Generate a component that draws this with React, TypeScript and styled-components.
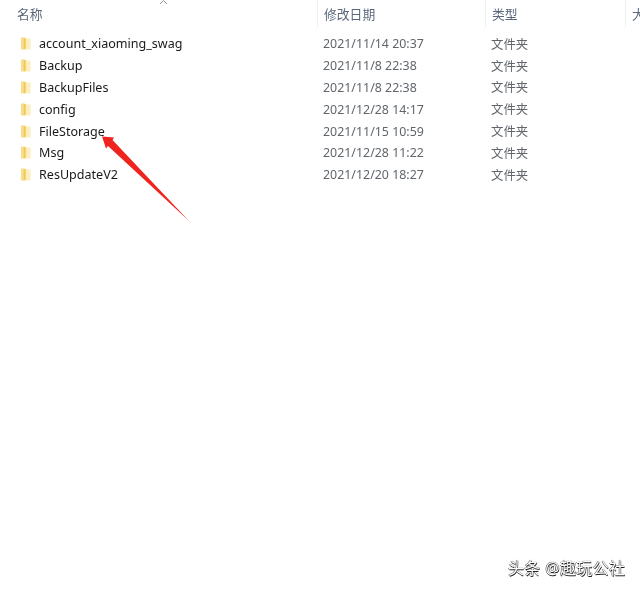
import React from "react";
import styled, { createGlobalStyle } from "styled-components";

const Global = createGlobalStyle`
  html, body { margin: 0; padding: 0; background: #fff; }
  #root { width: 640px; height: 591px; overflow: hidden; }
`;
const Page = styled.div`
  position: relative;
  width: 640px;
  height: 591px;
  overflow: hidden;
  background: #fff;
  font-family: "Noto Sans", "Noto Sans CJK SC", sans-serif;
  filter: blur(0.35px);
`;
const Header = styled.div`
  display: grid;
  grid-template-columns: 317px 168px 140px 15px;
  height: 27px;
  margin-bottom: 6px;
`;
const HeaderCell = styled.div<{ $first?: boolean }>`
  position: relative;
  padding: 5px 0 0 ${(p) => (p.$first ? "17px" : "6px")};
  font-size: 12.8px;
  line-height: 18px;
  color: #5a6779;
  white-space: nowrap;
  overflow: hidden;
  border-left: ${(p) => (p.$first ? "none" : "1px solid #eef0f2")};
`;
const SortCaret = styled.svg`
  position: absolute;
  left: 159px;
  top: 0;
`;
const List = styled.div`
  display: flex;
  flex-direction: column;
`;
const Row = styled.div`
  display: grid;
  grid-template-columns: 317px 168px 140px;
  height: 21.8px;
  align-items: center;
  white-space: nowrap;
`;
const NameCell = styled.div`
  display: flex;
  align-items: center;
  gap: 8px;
  padding-left: 20px;
  font-size: 12.55px;
  color: #1a1a1a;
`;
const Cell = styled.div`
  padding-left: 6px;
  font-size: 12.4px;
  color: #60666c;
`;
const Arrow = styled.svg`
  position: absolute;
  left: 95px;
  top: 128px;
`;
const Watermark = styled.div`
  position: absolute;
  left: 508px;
  top: 557px;
  font-size: 16px;
  line-height: 22px;
  letter-spacing: 0.35px;
  color: #fff;
  white-space: nowrap;
  text-shadow: 0 0 1px #222, 0.5px 0.5px 0.5px #222, -0.5px -0.5px 0.5px #555;
`;

const FolderIcon = () => (
  <svg width="11" height="13" viewBox="0 0 11 13">
    <path d="M1 0.5 H4 L5.5 1.5 V12.5 H1 Z" fill="#f9dd8a" />
    <path d="M5.5 1.5 H10.5 V12.5 H4 L5.5 11.5 Z" fill="#fdeebd" />
    <path d="M3.8 0.5 L5.8 1.2 V11.6 L3.8 12.5 Z" fill="#f3c95e" />
  </svg>
);

const rows = [
  ["account_xiaoming_swag", "2021/11/14 20:37"],
  ["Backup", "2021/11/8 22:38"],
  ["BackupFiles", "2021/11/8 22:38"],
  ["config", "2021/12/28 14:17"],
  ["FileStorage", "2021/11/15 10:59"],
  ["Msg", "2021/12/28 11:22"],
  ["ResUpdateV2", "2021/12/20 18:27"],
];

export default function App() {
  return (
    <Page>
      <Global />
      <Header>
        <HeaderCell $first>
          名称
          <SortCaret width="9" height="5" viewBox="0 0 9 5">
            <path d="M1 4 L4.5 0.5 L8 4" fill="none" stroke="#8a929c" strokeWidth="1" />
          </SortCaret>
        </HeaderCell>
        <HeaderCell>修改日期</HeaderCell>
        <HeaderCell>类型</HeaderCell>
        <HeaderCell>大</HeaderCell>
      </Header>
      <List>
        {rows.map(([name, date]) => (
          <Row key={name}>
            <NameCell>
              <FolderIcon />
              {name}
            </NameCell>
            <Cell>{date}</Cell>
            <Cell>文件夹</Cell>
          </Row>
        ))}
      </List>
      <Arrow width="96" height="95" viewBox="0 0 96 95">
        <path
          d="M7 8.5 L19 9.5 L17.5 12 L94 93 L13 18 L11 20.5 Z"
          fill="#f0241f"
        />
      </Arrow>
      <Watermark>头条 @趣玩公社</Watermark>
    </Page>
  );
}
